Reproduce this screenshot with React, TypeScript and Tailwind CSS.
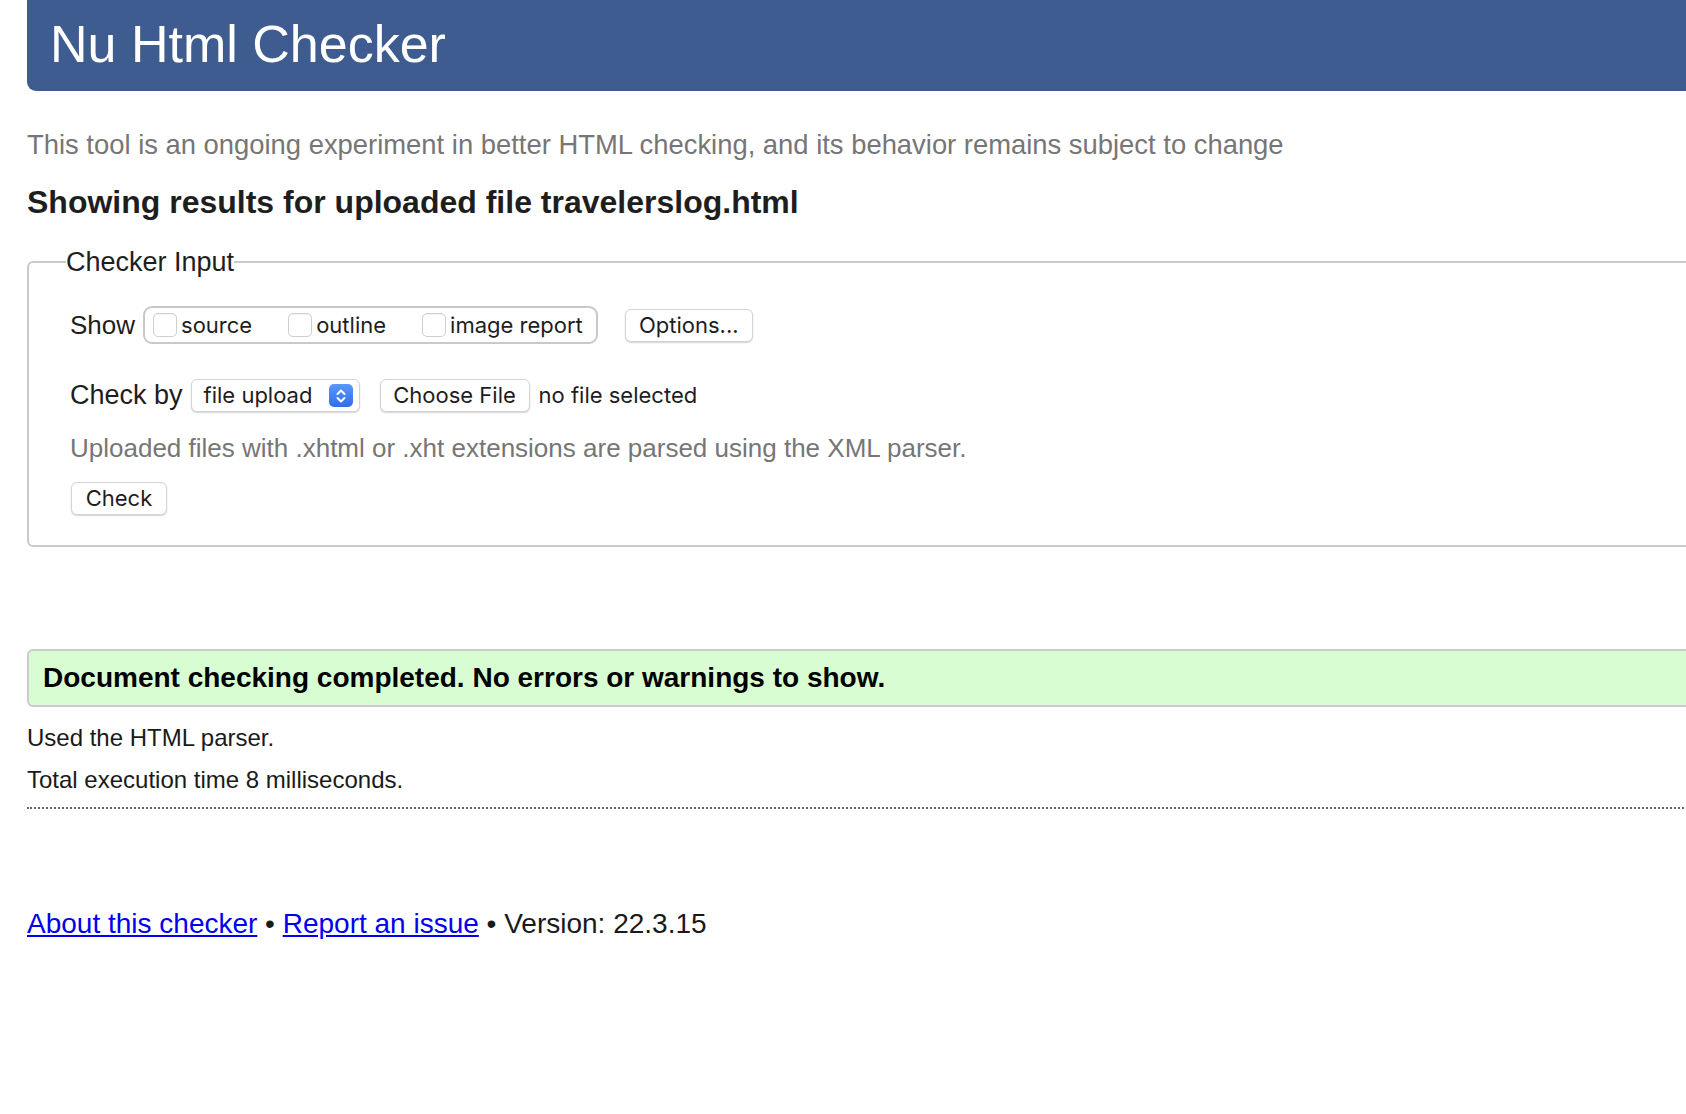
import React from "react";

const sans = "font-['Liberation_Sans',Arial,sans-serif]";
const ui = "font-['Inter','Noto_Sans',sans-serif]";

const buttonCls = `${ui} h-[33px] bg-white border border-[#d4d4d4] rounded-[6px] shadow-[0_1px_1.5px_rgba(0,0,0,0.18)] text-[22px] text-[#1d1d1d] flex items-center justify-center`;

function Checkbox({ label }: { label: string }) {
  return (
    <label className="flex items-center gap-[4px]">
      <span className="w-[24px] h-[24px] bg-white border border-[#cfcfcf] rounded-[5px] shadow-[inset_0_1px_1px_rgba(0,0,0,0.06)]" />
      <span className={`${ui} text-[22px] text-[#1d1d1d]`}>{label}</span>
    </label>
  );
}

function SelectArrows() {
  return (
    <span className="w-[24px] h-[23px] rounded-[5px] bg-gradient-to-b from-[#5a98f8] to-[#2f6fe6] flex items-center justify-center">
      <svg width="12" height="16" viewBox="0 0 12 16" fill="none" stroke="white" strokeWidth="2" strokeLinecap="round" strokeLinejoin="round">
        <path d="M2.5 6 6 2.5 9.5 6" />
        <path d="M2.5 10 6 13.5 9.5 10" />
      </svg>
    </span>
  );
}

export default function App() {
  return (
    <div className={`w-full min-h-screen bg-white overflow-hidden ${sans}`}>
      <div className="w-[1760px] pl-[27px]">
        {/* Header */}
        <div className="h-[91px] bg-[#3e5c8f] rounded-bl-[9px] flex items-center pl-[23px] pb-[3px]">
          <h1 className="text-white text-[52px] leading-none font-normal">Nu Html Checker</h1>
        </div>

        <p className="mt-[39px] text-[27.4px] leading-[30px] text-[#767676]">
          This tool is an ongoing experiment in better HTML checking, and its behavior remains subject to change
        </p>

        <h2 className="mt-[25px] text-[32px] leading-[34px] font-bold text-[#1e1e1e]">
          Showing results for uploaded file travelerslog.html
        </h2>

        {/* Checker input */}
        <fieldset className="mt-[28px] border-2 border-[#cacaca] rounded-[6px] pl-[41px] pb-[30px]">
          <legend className="ml-[-4px] text-[27px] leading-[30px] text-[#1e1e1e]">Checker Input</legend>

          <div className="mt-[29px] h-[38px] flex items-center">
            <span className="text-[26px] text-[#1e1e1e] mr-[8px]">Show</span>
            <div className="h-[38px] border-2 border-[#c9c9c9] rounded-[9px] flex items-center gap-[36px] pl-[8px] pr-[13px]">
              <Checkbox label="source" />
              <Checkbox label="outline" />
              <Checkbox label="image report" />
            </div>
            <button className={`${buttonCls} ml-[27px] w-[128px] h-[32px]`}>Options...</button>
          </div>

          <div className="mt-[35px] h-[33px] flex items-center">
            <span className="text-[27px] text-[#1e1e1e] mr-[8px]">Check by</span>
            <div className={`${ui} w-[169px] h-[33px] bg-white border border-[#d4d4d4] rounded-[6px] shadow-[0_1px_1.5px_rgba(0,0,0,0.18)] flex items-center justify-between pl-[12px] pr-[6px] text-[22px] text-[#1d1d1d]`}>
              <span>file upload</span>
              <SelectArrows />
            </div>
            <button className={`${buttonCls} ml-[20px] w-[150px]`}>Choose File</button>
            <span className={`${ui} ml-[9px] text-[22px] text-[#1d1d1d]`}>no file selected</span>
          </div>

          <p className="mt-[21px] text-[26px] leading-[30px] text-[#767676]">
            Uploaded files with .xhtml or .xht extensions are parsed using the XML parser.
          </p>

          <button className={`${buttonCls} mt-[19px] ml-px w-[96px]`}>Check</button>
        </fieldset>

        {/* Result */}
        <div className="mt-[102px] h-[58px] bg-[#d9fdd3] border-2 border-[#cbcbcb] rounded-[6px] flex items-center pl-[14px]">
          <span className="text-[28px] font-bold text-black">
            Document checking completed. No errors or warnings to show.
          </span>
        </div>

        <p className="mt-[16px] text-[24px] leading-[30px] text-[#1a1a1a]">Used the HTML parser.</p>
        <p className="mt-[12px] text-[24px] leading-[30px] text-[#1a1a1a]">Total execution time 8 milliseconds.</p>

        <div className="mt-[12px] border-t-2 border-dotted border-[#666]" />

        {/* Footer */}
        <p className="mt-[100px] text-[28px] leading-[30px] text-[#1a1a1a]">
          <a href="#" className="text-[#0000ee] underline">About this checker</a>
          {" • "}
          <a href="#" className="text-[#0000ee] underline">Report an issue</a>
          {" • Version: 22.3.15"}
        </p>
      </div>
    </div>
  );
}
